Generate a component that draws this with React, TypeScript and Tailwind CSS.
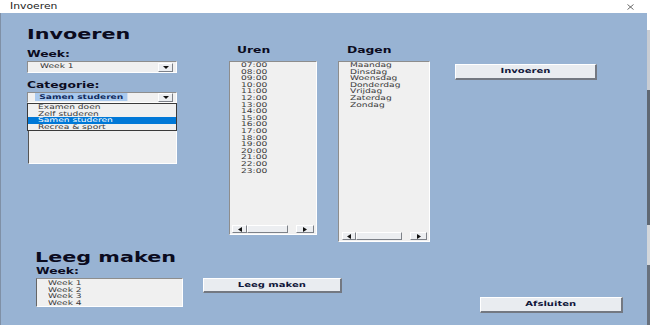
import React from "react";

const uren = [
  "07:00", "08:00", "09:00", "10:00", "11:00", "12:00", "13:00", "14:00", "15:00",
  "16:00", "17:00", "18:00", "19:00", "20:00", "21:00", "22:00", "23:00",
];
const dagen = ["Maandag", "Dinsdag", "Woensdag", "Donderdag", "Vrijdag", "Zaterdag", "Zondag"];
const categorieen = ["Examen doen", "Zelf studeren", "Samen studeren", "Recrea & sport"];
const weken = ["Week 1", "Week 2", "Week 3", "Week 4"];

const sunken =
  "border border-t-[#8d8d8d] border-l-[#8d8d8d] border-r-white border-b-white bg-[#f0f0f0]";
const raised =
  "border border-t-white border-l-white border-r-[#7d8188] border-b-[#7d8188] bg-[#eceef1]";

// the screenshot is stretched sideways, so text gets a horizontal scale
const Txt = ({
  children,
  sx,
  center,
  className = "",
}: {
  children: React.ReactNode;
  sx: string;
  center?: boolean;
  className?: string;
}) => (
  <span
    className={`inline-block whitespace-nowrap ${center ? "origin-center" : "origin-left"} ${sx} ${className}`}
  >
    {children}
  </span>
);

const Heading = ({ children }: { children: React.ReactNode }) => (
  <div className="h-[14px] leading-[14px] text-[14px] font-bold text-[#0b0b1e]">
    <Txt sx="scale-x-[1.48]">{children}</Txt>
  </div>
);

const Label = ({ children, className = "" }: { children: React.ReactNode; className?: string }) => (
  <div className={`h-[10px] leading-[10px] text-[8.5px] font-bold text-[#0b0b1e] ${className}`}>
    <Txt sx="scale-x-[1.45]">{children}</Txt>
  </div>
);

const Item = ({ children, pl = "pl-[11px]" }: { children: React.ReactNode; pl?: string }) => (
  <div className={`h-[6.6px] leading-[6.6px] text-[6.5px] text-[#3a3a3a] ${pl}`}>
    <Txt sx="scale-x-[1.4]">{children}</Txt>
  </div>
);

const Arrow = ({ dir }: { dir: "down" | "left" | "right" }) => {
  const pts = dir === "down" ? "0,0 6,0 3,3" : dir === "left" ? "4,0 4,5 0,2.5" : "0,0 0,5 4,2.5";
  const w = dir === "down" ? 6 : 4;
  const h = dir === "down" ? 3 : 5;
  return (
    <svg width={w} height={h} viewBox={`0 0 ${w} ${h}`}>
      <polygon points={pts} fill="#111" />
    </svg>
  );
};

const Combo = ({ value, selected, h }: { value: string; selected?: boolean; h: string }) => (
  <div className={`flex items-center ${sunken} ${h}`}>
    <div className={`flex-1 text-[6.5px] ${selected ? "pl-[7px]" : "pl-[12px]"}`}>
      {selected ? (
        <Txt sx="scale-x-[1.4]" className="bg-[#a9c9ee] px-[3px] leading-[8px] text-[#102a5c] font-semibold">
          {value}
        </Txt>
      ) : (
        <Txt sx="scale-x-[1.4]" className="leading-[8px] text-[#333]">
          {value}
        </Txt>
      )}
    </div>
    <div className={`mr-[3px] flex h-[9px] w-[15px] items-center justify-center ${raised}`}>
      <Arrow dir="down" />
    </div>
  </div>
);

const HScroll = ({
  pl,
  left,
  thumb,
  gap,
  right,
}: {
  pl: string;
  left: string;
  thumb: string;
  gap: string;
  right: string;
}) => (
  <div className={`mt-auto mb-px flex h-[8px] ${pl}`}>
    <div className={`flex items-center justify-center ${left} ${raised}`}>
      <Arrow dir="left" />
    </div>
    <div className={`${thumb} ${raised}`} />
    <div className={gap} />
    <div className={`flex items-center justify-center ${right} ${raised}`}>
      <Arrow dir="right" />
    </div>
  </div>
);

const Button = ({ children, className }: { children: React.ReactNode; className: string }) => (
  <div
    className={`flex items-center justify-center border-t border-l border-r-2 border-b-2 border-t-white border-l-white border-r-[#737881] border-b-[#737881] bg-[#e9ecf0] text-[7px] font-bold text-[#10163a] ${className}`}
  >
    <Txt sx="scale-x-[1.43]" center>
      {children}
    </Txt>
  </div>
);

export default function App() {
  return (
    <div className="flex h-[325px] w-[650px] overflow-hidden font-['DejaVu_Sans',sans-serif]">
      <div className="flex w-[647px] flex-col">
        {/* title bar */}
        <div className="flex h-[13px] items-center bg-white pl-[10px] pr-[13px]">
          <div className="h-[13px] leading-[13px] text-[8px] text-[#222]">
            <Txt sx="scale-x-[1.35]">Invoeren</Txt>
          </div>
          <svg className="ml-auto" width="7" height="6" viewBox="0 0 7 6">
            <path d="M0.5 0.5 L6.5 5.5 M6.5 0.5 L0.5 5.5" stroke="#444" strokeWidth="0.8" fill="none" />
          </svg>
        </div>

        <div className="flex flex-1 flex-col border-l border-l-[#7f90a6] bg-[#98b3d3]">
          {/* Invoeren */}
          <div className="flex h-[229px] items-start">
            <div className="ml-[26px] flex w-[150px] flex-col">
              <div className="mt-[14px]">
                <Heading>Invoeren</Heading>
              </div>
              <Label className="mt-[8px]">Week:</Label>
              <div className="mt-[2px]">
                <Combo value="Week 1" h="h-[12px]" />
              </div>
              <Label className="mt-[7px]">Categorie:</Label>
              <div className="mt-[2px]">
                <Combo value="Samen studeren" selected h="h-[11px]" />
              </div>
              <div className={`relative ml-px h-[61px] ${sunken} border-l-[#555]`}>
                <div className="absolute -left-[2px] -right-px -top-px h-[28px] border border-[#3a3a3a] bg-[#f0f0f0]">
                  {categorieen.map((c) =>
                    c === "Samen studeren" ? (
                      <div key={c} className="h-[6.6px] bg-[#0078d7] pl-[10px] text-[6.5px] leading-[6.6px] text-white">
                        <Txt sx="scale-x-[1.4]">{c}</Txt>
                      </div>
                    ) : (
                      <Item key={c} pl="pl-[10px]">
                        {c}
                      </Item>
                    )
                  )}
                </div>
              </div>
            </div>

            <div className="ml-[52px] mt-[32px] flex w-[88px] flex-col">
              <Label className="pl-[8px]">Uren</Label>
              <div className={`mt-[6px] flex h-[174px] flex-col ${sunken}`}>
                {uren.map((u) => (
                  <Item key={u}>{u}</Item>
                ))}
                <HScroll pl="pl-[2px]" left="w-[15px]" thumb="w-[41px]" gap="w-[8px]" right="w-[18px]" />
              </div>
            </div>

            <div className="ml-[21px] mt-[32px] flex w-[92px] flex-col">
              <Label className="pl-[9px]">Dagen</Label>
              <div className={`mt-[6px] flex h-[181px] flex-col ${sunken}`}>
                {dagen.map((d) => (
                  <Item key={d}>{d}</Item>
                ))}
                <HScroll pl="pl-[3px]" left="w-[14px]" thumb="w-[46px]" gap="w-[8px]" right="w-[17px]" />
              </div>
            </div>

            <Button className="ml-[25px] mt-[51px] h-[16px] w-[142px]">Invoeren</Button>
          </div>

          {/* Leeg maken */}
          <div className="flex flex-1 items-start">
            <div className="ml-[34px] flex w-[148px] flex-col">
              <div className="mt-[8px]">
                <Heading>Leeg maken</Heading>
              </div>
              <Label className="mt-[2px] pl-px">Week:</Label>
              <div className={`ml-px mt-[2px] h-[29px] pt-px ${sunken} border-l-[#666]`}>
                {weken.map((w) => (
                  <Item key={w}>{w}</Item>
                ))}
              </div>
            </div>
            <Button className="ml-[20px] mt-[36px] h-[15px] w-[139px]">Leeg maken</Button>
            <Button className="ml-[138px] mt-[55px] h-[16px] w-[143px]">Afsluiten</Button>
          </div>
        </div>
      </div>

      {/* sliver of the window behind */}
      <div className="flex w-[3px] flex-col">
        <div className="h-[30px] bg-white" />
        <div className="h-[60px] bg-[#c9cdd3]" />
        <div className="h-[135px] bg-[#5f6873]" />
        <div className="h-[40px] bg-[#d3d7db]" />
        <div className="flex-1 bg-[#68717d]" />
      </div>
    </div>
  );
}
